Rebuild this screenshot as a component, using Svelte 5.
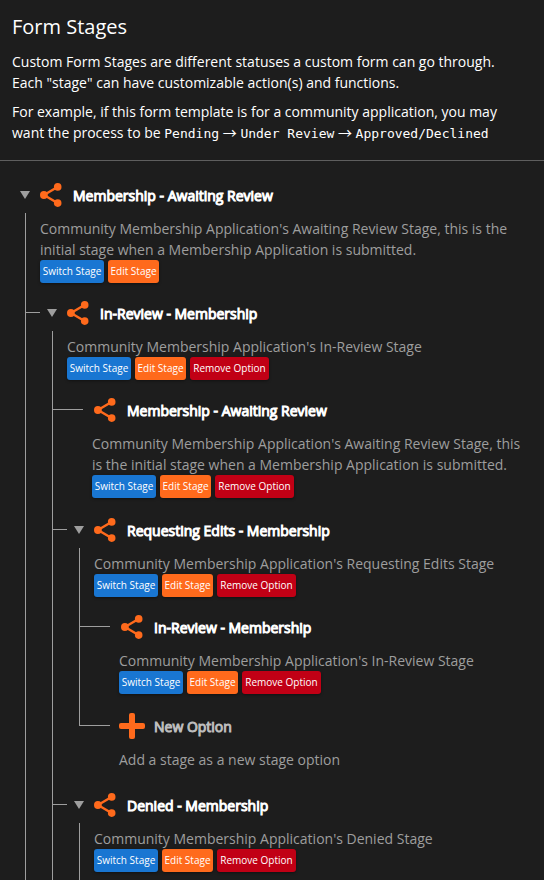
<script>
  const review = "Community Membership Application's Awaiting Review Stage, this is the initial stage when a Membership Application is submitted.";

  // `continues` marks a branch whose connector runs on past the last listed stage
  const stages = [
    {
      title: 'Membership - Awaiting Review',
      text: review,
      root: true,
      continues: true,
      children: [
        {
          title: 'In-Review - Membership',
          text: "Community Membership Application's In-Review Stage",
          continues: true,
          children: [
            { title: 'Membership - Awaiting Review', text: review },
            {
              title: 'Requesting Edits - Membership',
              text: "Community Membership Application's Requesting Edits Stage",
              children: [
                { title: 'In-Review - Membership', text: "Community Membership Application's In-Review Stage" },
                { title: 'New Option', text: 'Add a stage as a new stage option', add: true }
              ]
            },
            {
              title: 'Denied - Membership',
              text: "Community Membership Application's Denied Stage",
              continues: true,
              children: []
            }
          ]
        }
      ]
    }
  ];
</script>

{#snippet node(stage)}
  <li class:leaf={!stage.children} class:root={stage.root}>
    <div class="head">
      {#if stage.children}
        <button class="toggle" type="button" aria-label="Collapse {stage.title}" aria-expanded="true">
          <svg width="10" height="8" viewBox="0 0 10 8"><path d="M0 0H10L5 8Z" fill="#9e9e9e" /></svg>
        </button>
      {/if}
      <span class="icon">
        {#if stage.add}
          <svg width="26" height="26" viewBox="0 0 26 26" fill="#ff6a1c">
            <rect x="10" y="0" width="6" height="26" rx="2" />
            <rect x="0" y="10" width="26" height="6" rx="2" />
          </svg>
        {:else}
          <svg width="22" height="24" viewBox="0 0 22 24" fill="#ff6a1c">
            <path d="M17.5 4L4 12L17.5 20" fill="none" stroke="#ff6a1c" stroke-width="2.4" />
            <circle cx="17.7" cy="3.9" r="3.8" />
            <circle cx="3.9" cy="12" r="3.9" />
            <circle cx="17.7" cy="20.1" r="3.8" />
          </svg>
        {/if}
      </span>
      <h2 class:muted={stage.add}>{stage.title}</h2>
    </div>
    <div class="body" class:open={stage.children}>
      <p class:alone={stage.add}>{stage.text}</p>
      {#if !stage.add}
        <div class="actions">
          <button class="btn switch" type="button">Switch Stage</button>
          <button class="btn edit" type="button">Edit Stage</button>
          {#if !stage.root}
            <button class="btn remove" type="button">Remove Option</button>
          {/if}
        </div>
      {/if}
    </div>
    {#if stage.children?.length}
      <ul class:continues={stage.continues}>
        {#each stage.children as child}
          {@render node(child)}
        {/each}
      </ul>
    {/if}
  </li>
{/snippet}

<main>
  <header>
    <h1>Form Stages</h1>
    <p>Custom Form Stages are different statuses a custom form can go through. Each "stage" can have customizable action(s) and functions.</p>
    <p>For example, if this form template is for a community application, you may want the process to be <code>Pending</code> <span class="arrow">→</span> <code>Under Review</code> <span class="arrow">→</span> <code>Approved/Declined</code></p>
  </header>
  <ul class="tree">
    {#each stages as stage}
      {@render node(stage)}
    {/each}
  </ul>
</main>

<style>
  :global(body) {
    margin: 0;
    background: #1d1d1d;
  }
  main {
    box-sizing: border-box;
    height: 100vh;
    overflow: hidden;
    background: #1d1d1d;
    color: #fff;
    font: 14px/21px 'Open Sans', 'Noto Sans', sans-serif;
  }
  header {
    padding: 12px 24px 17px 12px;
    border-bottom: 1px solid #5e5e5e;
  }
  h1 {
    margin: 0 0 9px;
    font-size: 20px;
    line-height: 30px;
    font-weight: 400;
  }
  p {
    margin: 0;
  }
  header p + p {
    margin-top: 8px;
  }
  code {
    font: 13px/13px 'DejaVu Sans Mono', monospace;
  }
  .arrow {
    font-family: 'Noto Sans CJK JP', sans-serif;
    line-height: 14px;
  }
  ul {
    list-style: none;
    margin: 0 0 0 27px;
    padding: 0;
  }
  .tree {
    margin: 0;
    padding: 13px 12px 0;
  }
  li {
    position: relative;
    padding-top: 3px;
  }
  .leaf {
    padding-bottom: 2px;
  }
  /* connectors: the trunk beside each node and the branch leading to it */
  li:not(.root)::before {
    content: '';
    position: absolute;
    left: -14px;
    top: 0;
    bottom: 0;
    border-left: 1px solid #9e9e9e;
  }
  ul:not(.continues) > li:not(.root):last-child::before {
    bottom: auto;
    height: 21px;
  }
  li:not(.root)::after {
    content: '';
    position: absolute;
    left: -14px;
    top: 20px;
    width: 15px;
    border-top: 1px solid #9e9e9e;
  }
  li.leaf::after {
    width: 31px;
  }
  .head {
    display: flex;
    align-items: center;
    height: 36px;
    padding-left: 28px;
  }
  .toggle {
    display: flex;
    width: 10px;
    margin: 0 10px 0 -20px;
    padding: 0;
    border: 0;
    background: none;
    cursor: pointer;
  }
  .icon {
    display: flex;
    flex: none;
    width: 33px;
  }
  .leaf .icon:has(rect) {
    margin-left: -2px;
    width: 35px;
  }
  h2 {
    margin: 0;
    font-size: 14px;
    line-height: 21px;
    font-weight: 400;
    -webkit-text-stroke: 1px currentColor;
  }
  .muted {
    color: #bdbdbd;
  }
  .body {
    position: relative;
    padding: 5px 0 9px 28px;
    color: #9e9e9e;
  }
  .leaf > .body {
    padding-left: 26px;
  }
  .body.open::before {
    content: '';
    position: absolute;
    left: 13px;
    top: 0;
    bottom: 0;
    border-left: 1px solid #9e9e9e;
  }
  .alone {
    padding-bottom: 3px;
  }
  .actions {
    display: flex;
    gap: 4px;
  }
  .btn {
    height: 23px;
    padding: 0;
    border: 0;
    border-radius: 3px;
    color: #fff;
    font: 500 10px/23px 'Open Sans', 'Noto Sans', sans-serif;
    white-space: nowrap;
    box-shadow: 0 1px 3px rgba(0, 0, 0, 0.4);
    cursor: pointer;
  }
  .switch {
    width: 64px;
    background: #1976d2;
  }
  .edit {
    width: 51px;
    background: #ff6a1c;
  }
  .remove {
    width: 79px;
    background: #c10015;
  }
</style>
